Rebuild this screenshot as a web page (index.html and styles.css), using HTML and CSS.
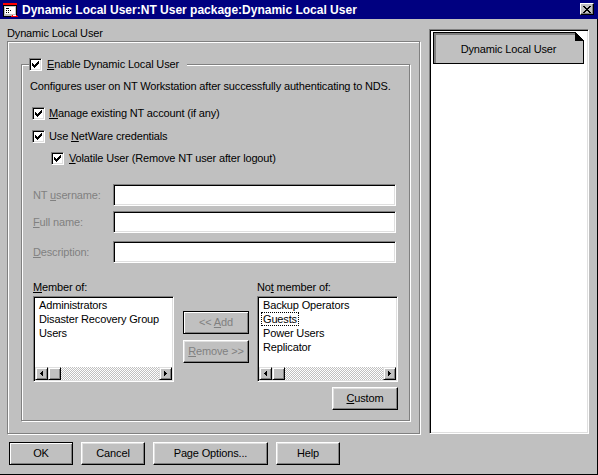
FILE: index.html
```html
<!DOCTYPE html>
<html>
<head>
<meta charset="utf-8">
<link rel="stylesheet" href="styles.css">
</head>
<body>
<div class="window">
  <div class="titlebar">
    <svg class="app-icon" width="16" height="16" viewBox="0 0 16 16" shape-rendering="crispEdges">
      <rect x="1" y="1" width="14" height="2" fill="#ff0000"/>
      <rect x="1" y="3" width="14" height="12" fill="#000"/>
      <rect x="2" y="4" width="12" height="10" fill="#c0c0c0"/>
      <rect x="3" y="5" width="10" height="7" fill="#fff"/>
      <rect x="4" y="6" width="3" height="1" fill="#000"/>
      <rect x="4" y="8" width="1" height="1" fill="#000"/>
      <rect x="6" y="8" width="1" height="1" fill="#000"/>
      <rect x="8" y="8" width="1" height="1" fill="#000"/>
      <rect x="4" y="10" width="1" height="1" fill="#000"/>
      <rect x="6" y="10" width="1" height="1" fill="#000"/>
      <path d="M9 15 A4 4 0 0 1 16 15 Z" fill="#ff0000"/>
      <rect x="11" y="13" width="3" height="1" fill="#fff"/>
    </svg>
    <span class="title">Dynamic Local User:NT User package:Dynamic Local User</span>
    <span class="close">
      <svg width="8" height="7" viewBox="0 0 8 7" shape-rendering="crispEdges"><path d="M0 0h2v1h-2z M6 0h2v1h-2z M1 1h2v1h-2z M5 1h2v1h-2z M2 2h4v1h-4z M3 3h2v1h-2z M2 4h4v1h-4z M1 5h2v1h-2z M5 5h2v1h-2z M0 6h2v1h-2z M6 6h2v1h-2z" fill="#000"/></svg>
    </span>
  </div>

  <div class="client">
    <div class="left">
      <div class="page-label">Dynamic Local User</div>
      <div class="page">
        <fieldset class="group">
          <legend class="legend">
            <span class="cb"><svg width="7" height="7" viewBox="0 0 7 7" shape-rendering="crispEdges"><path d="M0 2h1v3h-1z M1 3h1v3h-1z M2 4h1v3h-1z M3 3h1v3h-1z M4 2h1v3h-1z M5 1h1v3h-1z M6 0h1v3h-1z" fill="#000"/></svg></span>
            <span><u>E</u>nable Dynamic Local User</span>
          </legend>

          <div class="desc">Configures user on NT Workstation after successfully authenticating to NDS.</div>

          <div class="cbrow row1">
            <span class="cb"><svg width="7" height="7" viewBox="0 0 7 7" shape-rendering="crispEdges"><path d="M0 2h1v3h-1z M1 3h1v3h-1z M2 4h1v3h-1z M3 3h1v3h-1z M4 2h1v3h-1z M5 1h1v3h-1z M6 0h1v3h-1z" fill="#000"/></svg></span>
            <span><u>M</u>anage existing NT account (if any)</span>
          </div>
          <div class="cbrow row2">
            <span class="cb"><svg width="7" height="7" viewBox="0 0 7 7" shape-rendering="crispEdges"><path d="M0 2h1v3h-1z M1 3h1v3h-1z M2 4h1v3h-1z M3 3h1v3h-1z M4 2h1v3h-1z M5 1h1v3h-1z M6 0h1v3h-1z" fill="#000"/></svg></span>
            <span>Use <u>N</u>etWare credentials</span>
          </div>
          <div class="cbrow row3">
            <span class="cb"><svg width="7" height="7" viewBox="0 0 7 7" shape-rendering="crispEdges"><path d="M0 2h1v3h-1z M1 3h1v3h-1z M2 4h1v3h-1z M3 3h1v3h-1z M4 2h1v3h-1z M5 1h1v3h-1z M6 0h1v3h-1z" fill="#000"/></svg></span>
            <span><u>V</u>olatile User (Remove NT user after logout)</span>
          </div>

          <div class="fields">
            <div class="field f1"><span class="flabel">NT <u>u</u>sername:</span><span class="edit"></span></div>
            <div class="field f2"><span class="flabel"><u>F</u>ull name:</span><span class="edit"></span></div>
            <div class="field f3"><span class="flabel"><u>D</u>escription:</span><span class="edit"></span></div>
          </div>

          <div class="lists">
            <div class="lcol first">
              <div class="col-label"><u>M</u>ember of:</div>
              <div class="listbox">
                <div class="items">
                  <div class="item"><span>Administrators</span></div>
                  <div class="item"><span>Disaster Recovery Group</span></div>
                  <div class="item"><span>Users</span></div>
                </div>
                <div class="hscroll">
                  <span class="sbtn"><svg width="3" height="5" viewBox="0 0 3 5" shape-rendering="crispEdges"><path d="M2 0h1v5h-1z M1 1h1v3h-1z M0 2h1v1h-1z" fill="#000"/></svg></span>
                  <span class="sbtn thumb"></span>
                  <span class="track"></span>
                  <span class="sbtn"><svg width="3" height="5" viewBox="0 0 3 5" shape-rendering="crispEdges"><path d="M0 0h1v5h-1z M1 1h1v3h-1z M2 2h1v1h-1z" fill="#000"/></svg></span>
                </div>
              </div>
            </div>

            <div class="mid">
              <button class="btn default disabled"><span>&lt;&lt; <u>A</u>dd</span></button>
              <button class="btn disabled remove"><span><u>R</u>emove &gt;&gt;</span></button>
            </div>

            <div class="lcol second">
              <div class="col-label">No<u>t</u> member of:</div>
              <div class="listbox">
                <div class="items">
                  <div class="item"><span>Backup Operators</span></div>
                  <div class="item"><span class="focus">Guests</span></div>
                  <div class="item"><span>Power Users</span></div>
                  <div class="item"><span>Replicator</span></div>
                </div>
                <div class="hscroll">
                  <span class="sbtn"><svg width="3" height="5" viewBox="0 0 3 5" shape-rendering="crispEdges"><path d="M2 0h1v5h-1z M1 1h1v3h-1z M0 2h1v1h-1z" fill="#000"/></svg></span>
                  <span class="sbtn thumb"></span>
                  <span class="track"></span>
                  <span class="sbtn"><svg width="3" height="5" viewBox="0 0 3 5" shape-rendering="crispEdges"><path d="M0 0h1v5h-1z M1 1h1v3h-1z M2 2h1v1h-1z" fill="#000"/></svg></span>
                </div>
              </div>
              <button class="btn custom"><span><u>C</u>ustom</span></button>
            </div>
          </div>
        </fieldset>
      </div>
    </div>

    <div class="nav">
      <div class="nav-item">
        <span>Dynamic Local User</span>
        <svg class="dogear" width="9" height="9" viewBox="0 0 9 9" shape-rendering="crispEdges">
          <polygon points="0,0 9,0 9,9" fill="#fff"/>
          <polygon points="0,0 0,9 9,9" fill="#000"/>
        </svg>
      </div>
    </div>

    <div class="buttons">
      <button class="btn default w64"><span>OK</span></button>
      <button class="btn w64"><span>Cancel</span></button>
      <button class="btn w115"><span>Page Options...</span></button>
      <button class="btn w64"><span>Help</span></button>
    </div>
  </div>
</div>
</body>
</html>
```

FILE: styles.css
```css
* { box-sizing: border-box; }
html, body { margin: 0; padding: 0; }
body {
  width: 598px;
  height: 475px;
  overflow: hidden;
  background: #c0c0c0;
  font-family: "Liberation Sans", Arial, sans-serif;
  font-size: 11px;
  line-height: 13px;
  letter-spacing: -0.15px;
  color: #000;
}
u { text-decoration: underline; text-underline-offset: 1px; }

.window { width: 598px; height: 475px; display: flex; flex-direction: column; }

.titlebar {
  flex: none;
  height: 19px;
  background: #000080;
  color: #fff;
  display: flex;
  align-items: flex-start;
}
.app-icon { display: block; flex: none; margin: 2px 0 0 2px; }
.title {
  margin-left: 4px;
  padding-top: 4px;
  font-weight: bold;
  font-size: 12px;
  line-height: 13px;
  letter-spacing: 0;
  white-space: nowrap;
}
.close {
  margin: 3px 4px 0 auto;
  width: 14px;
  height: 12px;
  background: #c0c0c0;
  border: 1px solid;
  border-color: #fff #000 #000 #fff;
  box-shadow: inset -1px -1px #808080;
  display: flex;
  align-items: center;
  justify-content: center;
}
.close svg { display: block; }

.client {
  flex: 1;
  border-right: 1px solid #000;
  border-bottom: 1px solid #000;
  padding-left: 7px;
  display: grid;
  grid-template-columns: 414px 160px;
  column-gap: 8px;
  align-content: start;
}

.page-label { margin-top: 8px; height: 13px; }
.page {
  margin-top: 1px;
  width: 413px;
  height: 393px;
  border: 1px solid #808080;
  box-shadow: inset 1px 1px #fff, 1px 1px #fff;
  padding: 16px 0 0 13px;
}

.group {
  margin: 0;
  width: 389px;
  min-inline-size: 0;
  border: 1px solid #808080;
  box-shadow: inset 1px 1px #fff, 1px 1px #fff;
  padding: 0 0 10px 10px;
}
.legend {
  margin-left: -3px;
  padding: 0 8px 0 0;
  height: 13px;
  background: #c0c0c0;
  display: flex;
  align-items: center;
  gap: 5px;
}

.cb {
  flex: none;
  width: 13px;
  height: 13px;
  background: #fff;
  border: 1px solid;
  border-color: #808080 #fff #fff #808080;
  box-shadow: inset 1px 1px #000, inset -1px -1px #dfdfdf;
  display: flex;
  align-items: center;
  justify-content: center;
}
.cb svg { display: block; }

.desc { margin: 9px 0 0 -2px; white-space: nowrap; }

.cbrow { display: flex; align-items: center; gap: 4px; height: 13px; white-space: nowrap; }
.row1 { margin-top: 14px; }
.row2 { margin-top: 10px; }
.row3 { margin-top: 9px; margin-left: 19px; gap: 5px; }

.fields { margin-top: 19px; }
.field { display: flex; align-items: center; height: 22px; }
.f2 { margin-top: 5px; }
.f3 { margin-top: 8px; }
.flabel { width: 81px; color: #808080; padding-left: 1px; }
.edit {
  width: 283px;
  height: 22px;
  background: #fff;
  border: 1px solid;
  border-color: #808080 #fff #fff #808080;
  box-shadow: inset 1px 1px #000, inset -1px -1px #dfdfdf;
}

.lists { display: flex; margin-top: 18px; }
.lcol { width: 141px; display: flex; flex-direction: column; }
.lcol.first { margin-left: 1px; }
.col-label { height: 13px; }
.listbox {
  margin-top: 2px;
  width: 141px;
  height: 86px;
  background: #fff;
  border: 1px solid;
  border-color: #808080 #fff #fff #808080;
  box-shadow: inset 1px 1px #000, inset -1px -1px #dfdfdf;
  padding: 1px;
  display: flex;
  flex-direction: column;
}
.items { flex: 1; padding-left: 2px; }
.item { height: 14px; }
.item span {
  display: inline-block;
  line-height: 12px;
  padding: 0 1px;
  border: 1px solid transparent;
  white-space: nowrap;
}
.item span.focus { border: 1px dotted #000; }

.hscroll { height: 13px; display: flex; flex: none; }
.sbtn {
  flex: none;
  width: 13px;
  height: 13px;
  background: #c0c0c0;
  border: 1px solid;
  border-color: #dfdfdf #000 #000 #dfdfdf;
  box-shadow: inset 1px 1px #fff, inset -1px -1px #808080;
  display: flex;
  align-items: center;
  justify-content: center;
}
.sbtn svg { display: block; }
.track {
  flex: 1;
  background: repeating-conic-gradient(#c0c0c0 0 25%, #fff 0 50%) 0 0 / 2px 2px;
}

.mid {
  width: 66px;
  margin: 0 8px 0 9px;
  padding-top: 30px;
  display: flex;
  flex-direction: column;
}

.btn {
  height: 23px;
  padding: 0;
  margin: 0;
  font-family: inherit;
  font-size: 11px;
  line-height: 13px;
  letter-spacing: -0.15px;
  color: #000;
  background: #c0c0c0;
  border: 1px solid;
  border-color: #fff #000 #000 #fff;
  border-radius: 0;
  box-shadow: inset -1px -1px #808080, inset 1px 1px #dfdfdf;
  display: flex;
  align-items: center;
  justify-content: center;
  white-space: nowrap;
}
.btn.default {
  border-color: #000;
  box-shadow: inset 1px 1px #fff, inset -1px -1px #808080;
}
.btn.disabled { color: #808080; }
.mid .btn { width: 66px; }
.remove { margin-top: 6px; }
.custom { width: 66px; margin: 5px 0 0 auto; }

.nav {
  margin-top: 10px;
  height: 405px;
  background: #fff;
  border: 1px solid;
  border-color: #808080 #fff #fff #808080;
  box-shadow: inset 1px 1px #000, inset -1px -1px #dfdfdf;
  padding: 2px 3px 0 3px;
}
.nav-item {
  position: relative;
  width: 151px;
  height: 32px;
  background: #c0c0c0;
  border: 1px solid #000;
  box-shadow: inset 2px 2px #808080;
  display: flex;
  align-items: center;
  justify-content: center;
  padding-top: 2px;
  white-space: nowrap;
}
.dogear { position: absolute; top: -1px; right: -1px; display: block; }

.buttons {
  grid-column: 1 / span 2;
  margin-top: 8px;
  padding-left: 2px;
  display: flex;
  gap: 8px;
}
.w64 { width: 64px; }
.w115 { width: 115px; }
```
